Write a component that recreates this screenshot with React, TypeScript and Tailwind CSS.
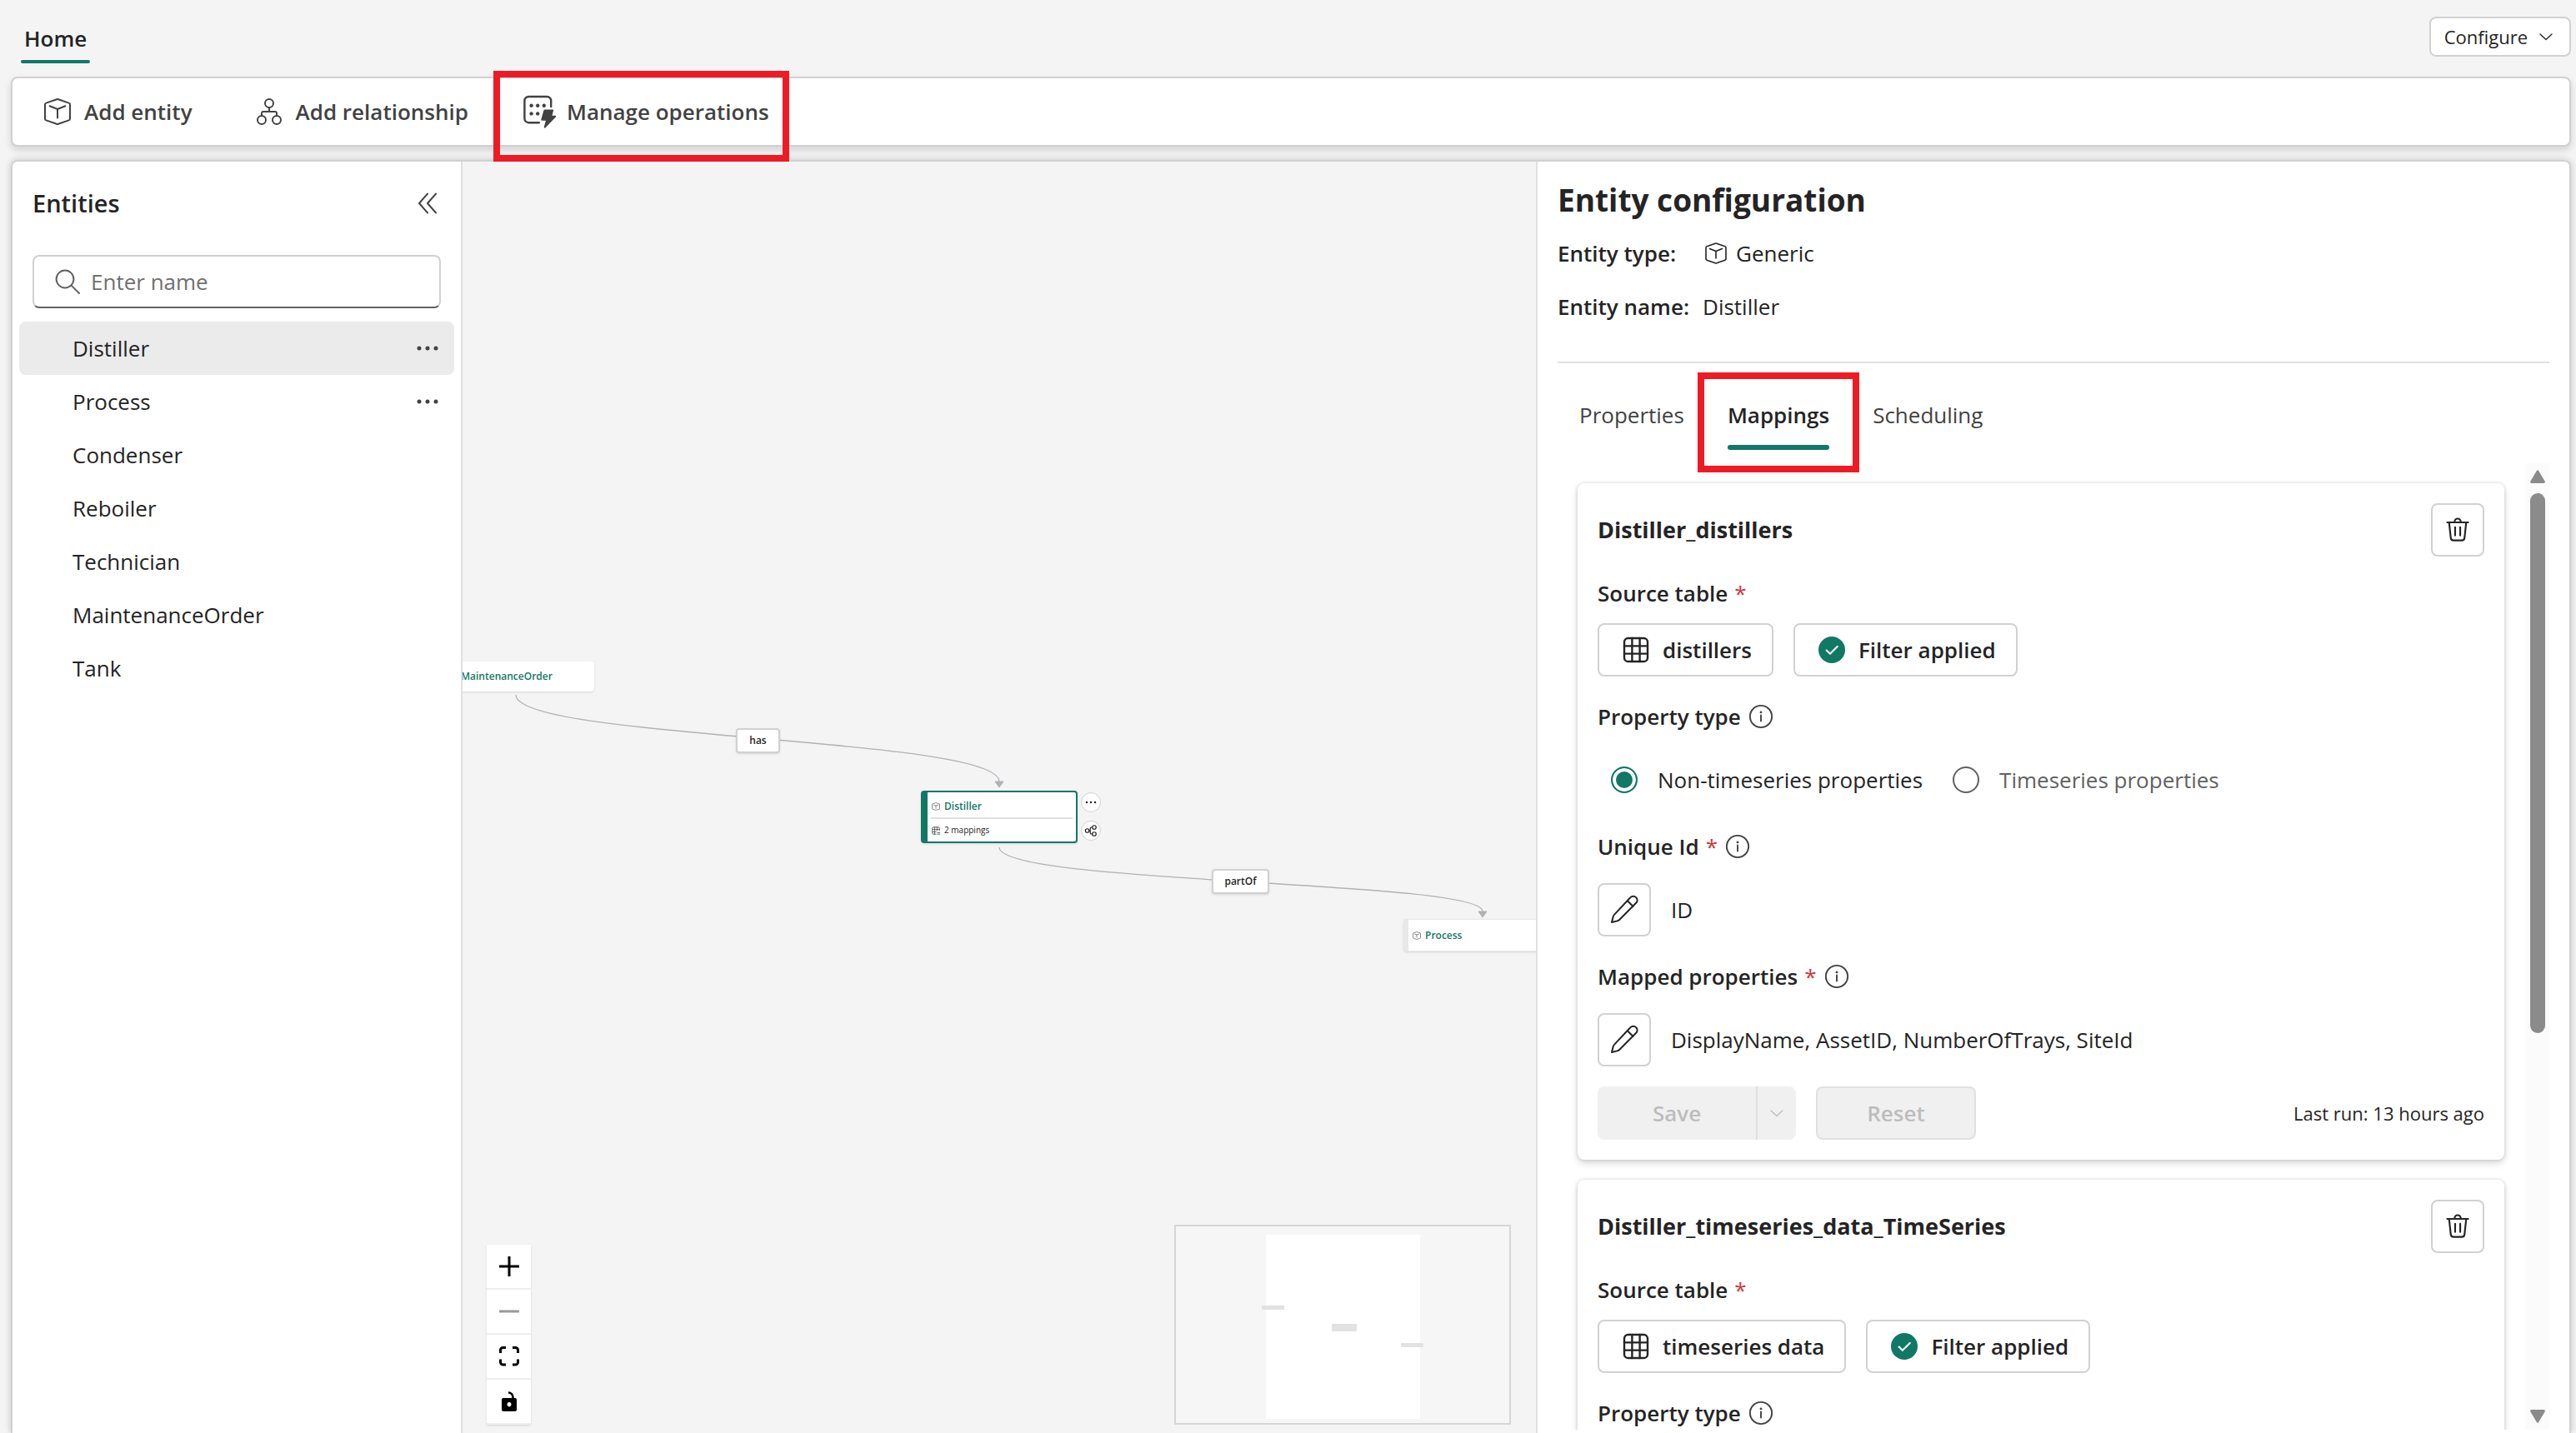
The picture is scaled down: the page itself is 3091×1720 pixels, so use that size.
import type { ReactNode } from "react";

type IconProps = { className?: string };

const Svg = ({ className = "size-10", width = 1, children }: IconProps & { width?: number; children: ReactNode }) => (
  <svg
    viewBox="0 0 20 20"
    className={className}
    fill="none"
    stroke="currentColor"
    strokeWidth={width}
    strokeLinecap="round"
    strokeLinejoin="round"
    aria-hidden="true"
  >
    {children}
  </svg>
);

const CubeIcon = ({ className }: IconProps) => (
  <Svg className={className}>
    <path d="M9.500 2.600a1.500 1.500 0 0 1 1 0l6.300 2.200a1 1 0 0 1 .7 1v8.400a1 1 0 0 1-.7 1l-6.300 2.200a1.500 1.500 0 0 1-1 0l-6.300-2.200a1 1 0 0 1-.7-1V5.800a1 1 0 0 1 .7-1z" />
    <path d="M5.300 6.600 10 8.500l4.700-1.900M10 8.500v5.200" />
  </Svg>
);

const HierarchyIcon = ({ className }: IconProps) => (
  <Svg className={className}>
    <circle cx="10" cy="5" r="2.500" />
    <circle cx="5.500" cy="15" r="2.500" />
    <circle cx="14.500" cy="15" r="2.500" />
    <path d="M10 7.500V10M5.500 12.500V11a1 1 0 0 1 1-1h7a1 1 0 0 1 1 1v1.500" />
  </Svg>
);

const BranchIcon = ({ className }: IconProps) => (
  <Svg className={className} width={1.5}>
    <circle cx="4.500" cy="10" r="2.800" />
    <circle cx="15" cy="5" r="2.800" />
    <circle cx="15" cy="15" r="2.800" />
    <path d="M12 5h-1a2 2 0 0 0-2 2v6a2 2 0 0 0 2 2h1M7.300 10H9" />
  </Svg>
);

const OperationsIcon = ({ className }: IconProps) => (
  <Svg className={className} width={1.2}>
    <path d="M16.600 7V3.500a2.500 2.500 0 0 0-2.500-2.500H3.200A2.500 2.500 0 0 0 .7 3.500v10.600a2.500 2.500 0 0 0 2.500 2.500h6.200" />
    <g fill="currentColor" stroke="none">
      <circle cx="4.800" cy="6.400" r="1.100" />
      <circle cx="8.600" cy="6.400" r="1.100" />
      <circle cx="12.400" cy="6.400" r="1.100" />
      <circle cx="4.800" cy="11.200" r="1.100" />
      <circle cx="8.600" cy="11.200" r="1.100" />
      <path d="M13 8.700h4.700a.4.4 0 0 1 .37.530L17.200 12.400h1.900c.42 0 .62.500.33.800l-6.300 6.500c-.32.330-.85.020-.73-.420l1.050-3.900h-2.200a.6.6 0 0 1-.58-.760l1.500-5.300A.85.850 0 0 1 13 8.700z" />
    </g>
  </Svg>
);

const DoubleChevronLeft = () => (
  <Svg>
    <path d="M10 4.300 5 10l5 5.700M15 4.300 10 10l5 5.700" />
  </Svg>
);

const SearchIcon = ({ className }: IconProps) => (
  <Svg className={className}>
    <circle cx="8.500" cy="8.500" r="5.200" />
    <path d="m12.300 12.300 4.700 4.700" />
  </Svg>
);

const DotsIcon = ({ className }: IconProps) => (
  <Svg className={className}>
    <g fill="currentColor" stroke="none">
      <circle cx="5" cy="10" r="1.250" />
      <circle cx="10" cy="10" r="1.250" />
      <circle cx="15" cy="10" r="1.250" />
    </g>
  </Svg>
);

const ChevronDown = ({ className }: IconProps) => (
  <Svg className={className} width={1.3}>
    <path d="m3 7 7 6.500L17 7" />
  </Svg>
);

const TrashIcon = () => (
  <Svg className="size-9" width={1.2}>
    <path d="M3 5h14M8 5V4.500a2 2 0 0 1 4 0V5M4.300 5l1.100 10.200A1.900 1.900 0 0 0 7.300 17h5.400a1.900 1.900 0 0 0 1.900-1.800L15.700 5M8.300 8.300v5.400M11.700 8.300v5.400" />
  </Svg>
);

const GridIcon = ({ className }: IconProps) => (
  <Svg className={className} width={1.2}>
    <rect x="3" y="3" width="14" height="14" rx="2.300" />
    <path d="M7.700 3v14M12.300 3v14M3 7.700h14M3 12.300h14" />
  </Svg>
);

const TableEditIcon = ({ className }: IconProps) => (
  <Svg className={className} width={1.3}>
    <path d="M17 10V5a2 2 0 0 0-2-2H5a2 2 0 0 0-2 2v10a2 2 0 0 0 2 2h5M7.700 3v14M12.300 3v7M3 7.700h14M3 12.300h7M13 17h5M13 14h5" />
  </Svg>
);

const CheckBadge = () => (
  <svg viewBox="0 0 20 20" className="size-8" aria-hidden="true">
    <circle cx="10" cy="10" r="10" fill="#117865" />
    <path d="m6 10.300 2.700 2.700L14.200 7.500" fill="none" stroke="#fff" strokeWidth="1.300" strokeLinecap="round" strokeLinejoin="round" />
  </svg>
);

const InfoIcon = () => (
  <Svg className="size-8 text-[#424242]" width={1.2}>
    <circle cx="10" cy="10" r="8.200" />
    <path d="M10 9v4.500" />
    <circle cx="10" cy="6.800" r=".9" fill="currentColor" stroke="none" />
  </Svg>
);

const PencilIcon = () => (
  <Svg>
    <path d="m12.700 3.600 1-1a2.300 2.300 0 0 1 3.400 0 2.300 2.300 0 0 1 0 3.300L7.200 15.900a3 3 0 0 1-1.400.8L2.500 17.500l.8-3.300a3 3 0 0 1 .8-1.400zM11.800 4.500l3.500 3.500" />
  </Svg>
);

const HomeTab = () => (
  <a href="#home" aria-current="page" className="flex flex-col font-semibold">
    <span className="px-1 leading-[52px]">Home</span>
    <span className="h-1 rounded-full bg-[#117865]" />
  </a>
);

const ToolButton = ({ icon, label, children }: { icon: ReactNode; label: string; children?: ReactNode }) => (
  <button className="relative flex h-20 items-center gap-3 font-semibold text-[#424242]">
    {icon}
    {label}
    {children}
  </button>
);

const entities = [
  { name: "Distiller", selected: true, menu: true },
  { name: "Process", menu: true },
  { name: "Condenser" },
  { name: "Reboiler" },
  { name: "Technician" },
  { name: "MaintenanceOrder" },
  { name: "Tank" },
];

const Sidebar = () => (
  <aside className="border-r-2 border-[#e0e0e0] bg-white">
    <div className="flex h-[100px] items-center justify-between pr-5 pl-6">
      <h2 className="text-[29px] font-semibold">Entities</h2>
      <button aria-label="Collapse" className="text-[#424242]">
        <DoubleChevronLeft />
      </button>
    </div>
    <label className="mx-6 mt-3 flex h-16 items-center gap-2 rounded-lg border-2 border-[#d1d1d1] border-b-[#616161] px-5 text-[#616161]">
      <SearchIcon className="size-10" />
      <input type="text" aria-label="Search entities" placeholder="Enter name" className="min-w-0 flex-1 outline-none placeholder:text-[#707070]" />
    </label>
    <ul className="mx-2 mt-4">
      {entities.map((e) => (
        <li
          key={e.name}
          className={`flex h-16 items-center justify-between rounded-lg pr-3 pl-16 ${e.selected ? "bg-[#ebebeb]" : ""}`}
        >
          <a href={`#${e.name}`}>{e.name}</a>
          {e.menu && (
            <button aria-label={`${e.name} options`} className="text-[#424242]">
              <DotsIcon className="size-10" />
            </button>
          )}
        </li>
      ))}
    </ul>
  </aside>
);

const EdgeLabel = ({ className, children }: { className: string; children: ReactNode }) => (
  <div
    className={`absolute flex h-[30px] items-center justify-center rounded border-2 border-[#d1d1d1] bg-white text-[12px] font-semibold shadow-sm ${className}`}
  >
    {children}
  </div>
);

const Diagram = () => (
  <>
    <svg className="absolute top-0 left-0 h-[1000px] w-[1288px]" viewBox="0 0 1288 1000" fill="none" aria-hidden="true">
      <path d="M64 640C64 694 644 690 644 744" stroke="#b1b1b7" strokeWidth="1.300" />
      <path d="M644 823C644 868 1224 862 1224 900" stroke="#b1b1b7" strokeWidth="1.300" />
      <path d="M639 744h10l-5 7zM1219 900h10l-5 7z" fill="#b1b1b7" stroke="#b1b1b7" />
    </svg>
    <div className="absolute top-[600px] -left-[30px] flex h-9 w-[188px] items-center rounded-sm bg-white pl-7 text-[12px] font-semibold text-[#117865] shadow">
      MaintenanceOrder
    </div>
    <EdgeLabel className="top-[680px] left-[328px] w-[53px]">has</EdgeLabel>
    <div className="absolute top-[755px] left-[550px] w-[188px] rounded border-2 border-l-8 border-[#117865] bg-white px-1 shadow">
      <div className="flex h-8 items-center gap-1 border-b-2 border-[#e0e0e0] pt-1">
        <CubeIcon className="size-3 text-[#424242]" />
        <span className="text-[12px] font-semibold text-[#117865]">Distiller</span>
      </div>
      <div className="flex h-[27px] items-center gap-1">
        <TableEditIcon className="size-3 text-[#424242]" />
        <span className="text-[10px]">2 mappings</span>
      </div>
    </div>
    <div className="absolute top-[757px] left-[742px] flex flex-col gap-[10px]">
      <button aria-label="More" className="grid size-6 place-items-center rounded-full border border-[#d1d1d1] bg-white">
        <DotsIcon className="size-5" />
      </button>
      <button aria-label="Relationships" className="grid size-6 place-items-center rounded-full border border-[#d1d1d1] bg-white">
        <BranchIcon className="size-4" />
      </button>
    </div>
    <EdgeLabel className="top-[849px] left-[899px] w-[69px]">partOf</EdgeLabel>
    <div className="absolute top-[909px] left-[1129px] flex h-[39px] w-[188px] items-center gap-1 rounded border border-l-[6px] border-[#e8e8e8] bg-white pl-1 shadow">
      <CubeIcon className="size-3 text-[#424242]" />
      <span className="text-[12px] font-semibold text-[#117865]">Process</span>
    </div>
  </>
);

const controls = [
  { label: "zoom in", icon: <path d="M12 0v24M0 12h24" stroke="#000" strokeWidth="3" /> },
  { label: "zoom out", icon: <path d="M0 12h24" stroke="#999" strokeWidth="3" /> },
  {
    label: "fit view",
    icon: <path d="M1.500 8V4.500a3 3 0 0 1 3-3H8M16 1.500h3.500a3 3 0 0 1 3 3V8M22.500 15.500V19a3 3 0 0 1-3 3H16M8 22H4.500a3 3 0 0 1-3-3v-3.500" fill="none" stroke="#000" strokeWidth="3" />,
  },
  {
    label: "toggle interactivity",
    icon: (
      <>
        <path d="M11 1.500a5.500 5.500 0 0 1 5.500 5.500v3" fill="none" stroke="#000" strokeWidth="2.500" />
        <path fillRule="evenodd" d="M5 8h14a2 2 0 0 1 2 2v12a2 2 0 0 1-2 2H5a2 2 0 0 1-2-2V10a2 2 0 0 1 2-2zM12 13a2.500 2.700 0 1 0 .01 0z" />
      </>
    ),
  },
];

const Canvas = () => (
  <main className="relative overflow-hidden bg-[#f4f4f4]">
    <Diagram />
    <div className="absolute bottom-2.5 left-[29px] flex flex-col shadow">
      {controls.map((c) => (
        <button key={c.label} aria-label={c.label} className="grid h-[54px] w-[53px] place-items-center border-b-2 border-[#eee] bg-white">
          <svg viewBox="0 0 24 24" className="size-6" aria-hidden="true">
            {c.icon}
          </svg>
        </button>
      ))}
    </div>
    <div className="absolute right-[30px] bottom-2.5 h-60 w-[404px] border-2 border-[#d6d6d6] bg-[#f6f6f6]">
      <svg viewBox="0 0 400 236" className="size-full" aria-hidden="true">
        <rect x="108" y="10" width="185" height="221" fill="#fff" />
        <g fill="#e2e2e2">
          <rect x="103" y="95" width="27" height="5" />
          <rect x="187" y="117" width="30" height="9" />
          <rect x="270" y="140" width="27" height="5" />
        </g>
      </svg>
    </div>
  </main>
);

const FieldLabel = ({ text, required, info }: { text: string; required?: boolean; info?: boolean }) => (
  <div className="flex h-10 items-center gap-2 font-semibold">
    {text}
    {required && <span className="font-normal text-[#d13438]">*</span>}
    {info && <InfoIcon />}
  </div>
);

const OutlineButton = ({ children }: { children: ReactNode }) => (
  <button className="flex h-16 items-center rounded-lg border-2 border-[#d1d1d1] bg-white pr-6 font-semibold">
    {children}
  </button>
);

const EditRow = ({ label, value }: { label: string; value: string }) => (
  <div className="mt-6 flex items-center gap-6">
    <button aria-label={label} className="grid size-16 place-items-center rounded-lg border-2 border-[#d1d1d1]">
      <PencilIcon />
    </button>
    <span>{value}</span>
  </div>
);

const MappingCard = ({ title, table, children }: { title: string; table: string; children?: ReactNode }) => (
  <section className="rounded-lg bg-white p-6 shadow-[0_0_4px_rgba(0,0,0,0.14),0_4px_8px_rgba(0,0,0,0.16)]">
    <div className="flex h-16 items-center justify-between">
      <h3 className="text-[27px] font-bold">{title}</h3>
      <button aria-label={`Delete ${title}`} className="grid size-16 place-items-center rounded-lg border-2 border-[#d1d1d1]">
        <TrashIcon />
      </button>
    </div>
    <div className="mt-6">
      <FieldLabel text="Source table" required />
    </div>
    <div className="mt-4 flex gap-6">
      <OutlineButton>
        <GridIcon className="mr-3 ml-6 size-10" />
        {table}
      </OutlineButton>
      <OutlineButton>
        <span className="mr-4 ml-7">
          <CheckBadge />
        </span>
        Filter applied
      </OutlineButton>
    </div>
    <div className="mt-7">
      <FieldLabel text="Property type" info />
    </div>
    {children}
  </section>
);

const propertyTypes = ["Non-timeseries properties", "Timeseries properties"];

const MappingForm = () => (
  <>
    <div className="mt-6 flex h-16 items-center gap-8 pl-4">
      {propertyTypes.map((o, i) => (
        <label key={o} className={`flex items-center gap-6 ${i === 0 ? "pr-1" : "text-[#616161]"}`}>
          <input
            type="radio"
            name="property-type"
            defaultChecked={i === 0}
            className="size-8 appearance-none rounded-full border-2 border-[#616161] bg-white checked:border-[#117865] checked:bg-[#117865] checked:shadow-[inset_0_0_0_4px_#fff]"
          />
          {o}
        </label>
      ))}
    </div>
    <div className="mt-7">
      <FieldLabel text="Unique Id" required info />
    </div>
    <EditRow label="Edit unique id" value="ID" />
    <div className="mt-7">
      <FieldLabel text="Mapped properties" required info />
    </div>
    <EditRow label="Edit mapped properties" value="DisplayName, AssetID, NumberOfTrays, SiteId" />
    <div className="mt-6 flex items-center gap-6 font-semibold text-[#bdbdbd]">
      <div className="flex h-16 rounded-lg bg-[#f0f0f0]">
        <button disabled className="w-48 border-r-2 border-[#e0e0e0]">
          Save
        </button>
        <button disabled aria-label="Save options" className="grid w-[46px] place-items-center">
          <ChevronDown className="size-5" />
        </button>
      </div>
      <button disabled className="h-16 w-48 rounded-lg border-2 border-[#e0e0e0] bg-[#f0f0f0]">
        Reset
      </button>
      <span className="ml-auto text-[22px] font-normal text-[#242424]">Last run: 13 hours ago</span>
    </div>
  </>
);

const Scrollbar = () => (
  <div className="flex w-[29px] flex-col items-center bg-[#fbfbfb] pt-2 pb-2" aria-hidden="true">
    <svg viewBox="0 0 18 16" className="h-4 w-[18px]" fill="#8b8b8b">
      <path d="M8 .8a1.300 1.300 0 0 1 2 0l7.600 12.700c.5.900 0 2.500-1 2.500H1.400c-1 0-1.500-1.600-1-2.500z" />
    </svg>
    <div className="mt-3 h-[648px] w-[18px] rounded-full bg-[#8b8b8b]" />
    <svg viewBox="0 0 18 16" className="mt-auto h-4 w-[18px]" fill="#8b8b8b">
      <path d="M8 15.200a1.300 1.300 0 0 0 2 0l7.600-12.700c.5-.9 0-2.500-1-2.500H1.400c-1 0-1.500 1.600-1 2.500z" />
    </svg>
  </div>
);

const tabs = ["Properties", "Mappings", "Scheduling"];

const ConfigPanel = () => (
  <aside className="flex min-h-0 flex-col border-l-2 border-[#e0e0e0] bg-white px-6">
    <h1 className="mt-5 text-[37px] leading-[52px] font-bold">Entity configuration</h1>
    <dl className="mt-1.5 grid grid-cols-[auto_1fr] gap-x-4">
      <dt className="leading-[64px] font-semibold">Entity type:</dt>
      <dd className="flex h-16 items-center gap-2">
        <CubeIcon className="size-8" />
        Generic
      </dd>
      <dt className="leading-[64px] font-semibold">Entity name:</dt>
      <dd className="leading-[64px]">Distiller</dd>
    </dl>
    <hr className="mt-[34px] border-t-2 border-[#e0e0e0]" />
    <div role="tablist" className="flex h-[120px] shrink-0 items-start gap-[52px] pt-[42px] pl-[26px]">
      {tabs.map((t) =>
        t === "Mappings" ? (
          <button key={t} role="tab" aria-selected="true" className="relative flex flex-col gap-4 leading-10 font-semibold">
            {t}
            <span className="h-1.5 w-full rounded-full bg-[#117865]" />
            <span className="pointer-events-none absolute -inset-x-9 -top-[31px] -bottom-[27px] z-10 border-8 border-[#ed1c24]" />
          </button>
        ) : (
          <button key={t} role="tab" aria-selected="false" className="leading-10 text-[#424242]">
            {t}
          </button>
        ),
      )}
    </div>
    <div className="mb-1 flex min-h-0 flex-1">
      <div className="flex min-w-0 flex-1 flex-col gap-6 overflow-hidden pt-6 pr-[25px] pl-6">
        <MappingCard title="Distiller_distillers" table="distillers">
          <MappingForm />
        </MappingCard>
        <MappingCard title="Distiller_timeseries_data_TimeSeries" table="timeseries data" />
      </div>
      <Scrollbar />
    </div>
  </aside>
);

export default function App() {
  return (
    <div className="flex h-screen flex-col overflow-hidden bg-[#f4f4f4] pr-1.5 pl-[13px] font-['Open_Sans','Noto_Sans',sans-serif] text-[26px] text-[#242424]">
      <header className="flex h-[92px] shrink-0 items-start justify-between pt-5 pl-3">
        <HomeTab />
        <button aria-haspopup="menu" className="flex h-12 items-center gap-3 rounded-lg border-2 border-[#d1d1d1] bg-white pr-[18px] pl-4 text-[22px]">
          Configure
          <ChevronDown className="size-5" />
        </button>
      </header>
      <div
        role="toolbar"
        className="relative z-10 flex shrink-0 gap-[66px] rounded-lg border-2 border-[#d1d1d1] bg-white pl-[34px] shadow-[0_4px_8px_rgba(0,0,0,0.14)]"
      >
        <div className="flex gap-[72px]">
          <ToolButton icon={<CubeIcon />} label="Add entity" />
          <ToolButton icon={<HierarchyIcon />} label="Add relationship" />
        </div>
        <ToolButton icon={<OperationsIcon />} label="Manage operations">
          <span className="pointer-events-none absolute -top-[9px] -right-6 -bottom-5 -left-9 border-8 border-[#ed1c24]" />
        </ToolButton>
      </div>
      <div className="mt-4 grid min-h-0 flex-1 grid-cols-[540px_minmax(0,1fr)_1240px] grid-rows-1 overflow-hidden rounded-t-lg border-2 border-b-0 border-[#d1d1d1] shadow-[0_0_8px_rgba(0,0,0,0.2)]">
        <Sidebar />
        <Canvas />
        <ConfigPanel />
      </div>
    </div>
  );
}
